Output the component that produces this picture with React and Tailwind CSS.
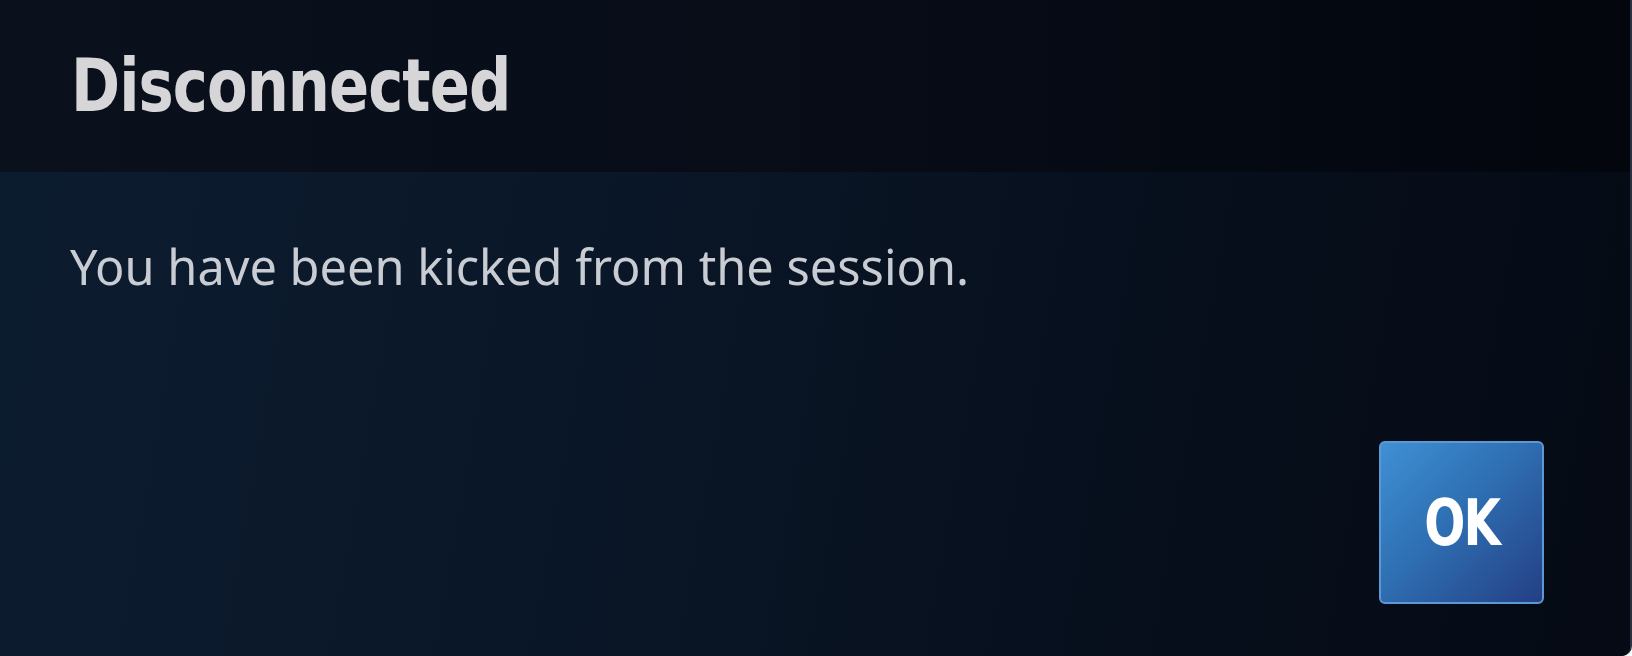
export default function App() {
  return (
    <div className="w-[1632px] h-[656px] flex flex-col overflow-hidden bg-[#060b15] rounded-br-[10px] border-r-2 border-[#2a3140]">
      {/* header */}
      <div className="h-[172px] shrink-0 pl-[71px] pt-[49px] bg-[linear-gradient(90deg,#0a111d_0%,#070c17_50%,#03060d_100%)]">
        <h1
          className="text-[73px] leading-none font-bold text-[#d6d6d8] tracking-[-1px] scale-x-[0.9] origin-left"
          style={{ fontFamily: '"DejaVu Sans Condensed", "DejaVu Sans", sans-serif' }}
        >
          Disconnected
        </h1>
      </div>

      {/* body */}
      <div className="flex-1 flex flex-col pl-[70px] pr-[86px] pt-[70px] pb-[52px] bg-[linear-gradient(100deg,#0c1c2f_0%,#0a1728_35%,#07101e_65%,#050a14_100%)]">
        <p
          className="text-[48.7px] leading-none text-[#c9cdd3]"
          style={{ fontFamily: '"Noto Sans", sans-serif' }}
        >
          You have been kicked from the session.
        </p>
        <div className="flex-1 flex items-end justify-end">
          <button
            className="w-[165px] h-[163px] rounded-[6px] border-2 border-[#5b98d4] bg-[linear-gradient(135deg,#3f90d4_0%,#2f6fb3_45%,#243f84_100%)] flex items-center justify-center text-white"
          >
            <span
              className="text-[64px] font-bold leading-none tracking-[-2px] scale-x-[0.84]"
              style={{ fontFamily: '"DejaVu Sans Condensed", "DejaVu Sans", sans-serif' }}
            >
              OK
            </span>
          </button>
        </div>
      </div>
    </div>
  );
}
